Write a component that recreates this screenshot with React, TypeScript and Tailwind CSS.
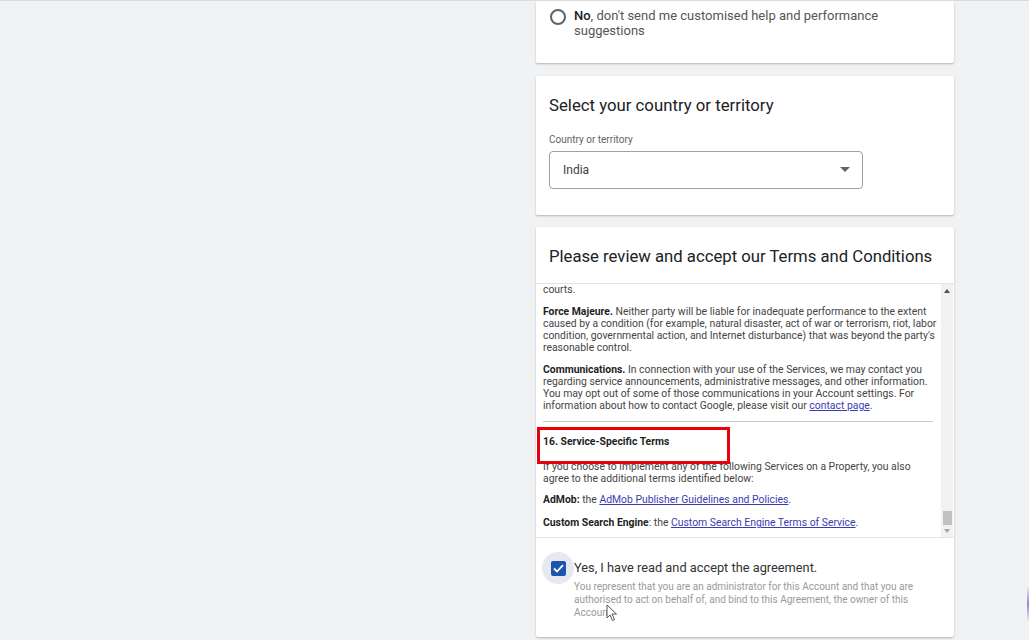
import React from "react";

const F = { fontFamily: "Roboto, 'Liberation Sans', Arial, sans-serif" };

function Card({ className = "", children }: { className?: string; children?: React.ReactNode }) {
  return (
    <div className={"bg-white rounded-[2px] shadow-[0_1px_2px_rgba(0,0,0,0.22),0_1px_3px_rgba(0,0,0,0.06)] " + className}>
      {children}
    </div>
  );
}

function Line({ children }: { children: React.ReactNode }) {
  return <div className="whitespace-nowrap h-[12px]">{children}</div>;
}

export default function App() {
  return (
    <div
      style={F}
      className="relative w-[1029px] h-[640px] overflow-hidden bg-[#f1f2f4] border-t border-[#dadbdd] flex"
    >
      <div className="w-[536px] shrink-0" />
      <div className="w-[418px] shrink-0 flex flex-col">
        {/* Card 1 */}
        <Card className="h-[62px] pl-[14px] pt-[7px]">
          <div className="flex items-start gap-[8px]">
            <div className="w-[16px] h-[16px] mt-[1px] rounded-full border-[2px] border-[#5f6368] shrink-0" />
            <div className="text-[13px] leading-[15px] text-[#555]">
              <span className="text-[#202124] font-medium">No</span>, don't send me customised help and performance
              <br />
              suggestions
            </div>
          </div>
        </Card>

        {/* Card 2 */}
        <Card className="mt-[13px] h-[139px] px-[13px] pt-[18px]">
          <div className="text-[16.75px] leading-[22px] text-[#202124]">Select your country or territory</div>
          <div className="mt-[18px] text-[10px] leading-[12px] text-[#5f6368]">Country or territory</div>
          <div className="mt-[5px] w-[314px] h-[38px] border border-[#9aa0a6] rounded-[4px] flex items-center pl-[13px] pr-[12px] justify-between">
            <span className="text-[12px] text-[#3c4043]">India</span>
            <svg width="10" height="6" viewBox="0 0 10 6">
              <path d="M0 0 L10 0 L5 5 Z" fill="#5f6368" />
            </svg>
          </div>
        </Card>

        {/* Card 3 */}
        <Card className="relative mt-[12px] h-[410px] flex flex-col">
          <div className="h-[57px] px-[13px] pt-[3px] flex items-center border-b border-[#e3e3e3]">
            <div className="text-[16.7px] leading-[22px] text-[#202124]">
              Please review and accept our Terms and Conditions
            </div>
          </div>
          <div className="h-[254px] flex border-b border-[#e3e3e3]">
            <div className="flex-1 overflow-hidden pl-[7px] text-[10.4px] leading-[12px] text-[#444]">
              <div className="mt-0">
                <Line>courts.</Line>
                <div className="mt-[10px]">
                  <Line>
                    <b className="text-[#1f1f1f]">Force Majeure.</b> Neither party will be liable for inadequate performance to the extent
                  </Line>
                  <Line>caused by a condition (for example, natural disaster, act of war or terrorism, riot, labor</Line>
                  <Line>condition, governmental action, and Internet disturbance) that was beyond the party's</Line>
                  <Line>reasonable control.</Line>
                </div>
                <div className="mt-[10px]">
                  <Line>
                    <b className="text-[#1f1f1f]">Communications.</b> In connection with your use of the Services, we may contact you
                  </Line>
                  <Line>regarding service announcements, administrative messages, and other information.</Line>
                  <Line>You may opt out of some of those communications in your Account settings. For</Line>
                  <Line>
                    information about how to contact Google, please visit our{" "}
                    <span className="text-[#3b3bb0] underline">contact page</span>.
                  </Line>
                </div>
                <div className="mt-[9px] mr-[8px] h-[1px] bg-[#c8c8c8]" />
                <div className="mt-[14px] h-[12px] whitespace-nowrap font-bold text-[#1f1f1f] text-[10.4px]">
                  16. Service-Specific Terms
                </div>
                <div className="mt-[13px]">
                  <Line>If you choose to implement any of the following Services on a Property, you also</Line>
                  <Line>agree to the additional terms identified below:</Line>
                </div>
                <div className="mt-[9px]">
                  <Line>
                    <b className="text-[#1f1f1f]">AdMob:</b> the{" "}
                    <span className="text-[#3b3bb0] underline">AdMob Publisher Guidelines and Policies</span>.
                  </Line>
                </div>
                <div className="mt-[11px]">
                  <Line>
                    <b className="text-[#1f1f1f]">Custom Search Engine</b>: the{" "}
                    <span className="text-[#3b3bb0] underline">Custom Search Engine Terms of Service</span>.
                  </Line>
                </div>
              </div>
            </div>
            {/* scrollbar */}
            <div className="w-[12px] mr-[1px] bg-[#f1f1f1] flex flex-col items-center">
              <div className="h-[14px] flex items-center justify-center">
                <svg width="6" height="4" viewBox="0 0 6 4">
                  <path d="M0 4 L6 4 L3 0 Z" fill="#505050" />
                </svg>
              </div>
              <div className="flex-1" />
              <div className="w-[9px] h-[14px] bg-[#c1c1c1]" />
              <div className="h-[12px] flex items-center justify-center">
                <svg width="6" height="4" viewBox="0 0 6 4">
                  <path d="M0 0 L6 0 L3 4 Z" fill="#a3a3a3" />
                </svg>
              </div>
            </div>
          </div>
          <div className="flex-1 flex items-start pl-[6px] pt-[14px]">
            <div className="w-[32px] h-[32px] rounded-full bg-[#e6e9f0] flex items-center justify-center shrink-0">
              <div className="w-[15px] h-[15px] rounded-[2px] bg-[#1a56ad] flex items-center justify-center">
                <svg width="11" height="9" viewBox="0 0 11 9">
                  <path d="M1 4.5 L4 7.5 L10 1.2" stroke="white" strokeWidth="1.8" fill="none" />
                </svg>
              </div>
            </div>
            <div className="pt-[8px]">
              <div className="text-[12.8px] leading-[16px] text-[#333]">Yes, I have read and accept the agreement.</div>
              <div className="mt-[4px] text-[10px] leading-[13px] text-[#9a9a9a]">
                You represent that you are an administrator for this Account and that you are
                <br />
                authorised to act on behalf of, and bind to this Agreement, the owner of this
                <br />
                Account.
              </div>
            </div>
          </div>
          {/* red highlight */}
          <div className="absolute left-[1px] top-[200px] w-[193px] h-[37px] border-[3px] border-[#e8000b]" />
          {/* mouse cursor */}
          <svg className="absolute left-[70px] top-[377px]" width="12" height="18" viewBox="0 0 12 18">
            <path d="M1 1 L1 14 L4 11 L6.5 16.5 L8.5 15.5 L6 10 L10.5 10 Z" fill="white" stroke="#555" strokeWidth="1" />
          </svg>
        </Card>
      </div>
      <div className="absolute right-0 top-[585px] w-[2px] h-[36px] bg-gradient-to-b from-transparent via-[#8a86d8] to-transparent" />
    </div>
  );
}
